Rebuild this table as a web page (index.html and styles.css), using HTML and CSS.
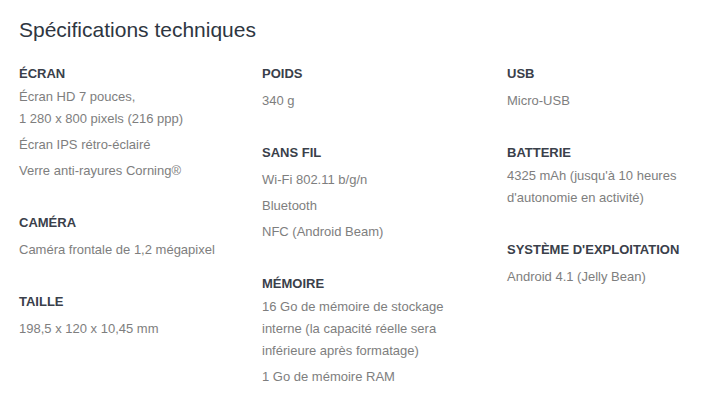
FILE: index.html
```html
<!DOCTYPE html>
<html lang="fr">
<head>
<meta charset="utf-8">
<title>Spécifications techniques</title>
<link rel="stylesheet" href="styles.css">
</head>
<body>
<section class="specs">
  <h2 class="specs-title">Spécifications techniques</h2>
  <div class="specs-grid">
    <div class="specs-col">
      <div class="spec-group">
        <h3 class="spec-name">ÉCRAN</h3>
        <p class="spec-value spec-value--wrap">Écran HD 7 pouces,<br>1 280 x 800 pixels (216 ppp)</p>
        <p class="spec-value">Écran IPS rétro-éclairé</p>
        <p class="spec-value">Verre anti-rayures Corning®</p>
      </div>
      <div class="spec-group">
        <h3 class="spec-name">CAMÉRA</h3>
        <p class="spec-value">Caméra frontale de 1,2 mégapixel</p>
      </div>
      <div class="spec-group">
        <h3 class="spec-name">TAILLE</h3>
        <p class="spec-value">198,5 x 120 x 10,45 mm</p>
      </div>
    </div>
    <div class="specs-col">
      <div class="spec-group">
        <h3 class="spec-name">POIDS</h3>
        <p class="spec-value">340 g</p>
      </div>
      <div class="spec-group">
        <h3 class="spec-name">SANS FIL</h3>
        <p class="spec-value">Wi-Fi 802.11 b/g/n</p>
        <p class="spec-value">Bluetooth</p>
        <p class="spec-value">NFC (Android Beam)</p>
      </div>
      <div class="spec-group">
        <h3 class="spec-name">MÉMOIRE</h3>
        <p class="spec-value spec-value--wrap">16 Go de mémoire de stockage interne (la capacité réelle sera inférieure après formatage)</p>
        <p class="spec-value">1 Go de mémoire RAM</p>
      </div>
    </div>
    <div class="specs-col">
      <div class="spec-group">
        <h3 class="spec-name">USB</h3>
        <p class="spec-value">Micro-USB</p>
      </div>
      <div class="spec-group">
        <h3 class="spec-name">BATTERIE</h3>
        <p class="spec-value spec-value--wrap">4325 mAh (jusqu'à 10 heures d'autonomie en activité)</p>
      </div>
      <div class="spec-group">
        <h3 class="spec-name">SYSTÈME D'EXPLOITATION</h3>
        <p class="spec-value">Android 4.1 (Jelly Bean)</p>
      </div>
    </div>
  </div>
</section>
</body>
</html>
```
FILE: styles.css
```css
html, body {
  margin: 0;
  padding: 0;
  background: #ffffff;
}

body {
  font-family: "Liberation Sans", Arial, sans-serif;
  width: 701px;
  height: 400px;
  overflow: hidden;
}

.specs {
  padding: 18px 0 0 19px;
}

.specs-title {
  margin: 0;
  font-size: 21px;
  line-height: 24px;
  font-weight: normal;
  color: #2e3641;
}

.specs-grid {
  display: grid;
  grid-template-columns: 243px 245px 1fr;
  margin-top: 22px;
}

.specs-col {
  display: flex;
  flex-direction: column;
  gap: 31px;
}

.spec-group {
  display: flex;
  flex-direction: column;
  gap: 4px;
}

.spec-name {
  margin: 0 0 2px;
  font-size: 13px;
  line-height: 20px;
  font-weight: bold;
  color: #3a404a;
}

.spec-value {
  margin: 0;
  width: 210px;
  font-size: 13px;
  line-height: 22px;
  color: #7e7e7e;
}

.spec-value--wrap {
  margin-top: -4px;
}
```
